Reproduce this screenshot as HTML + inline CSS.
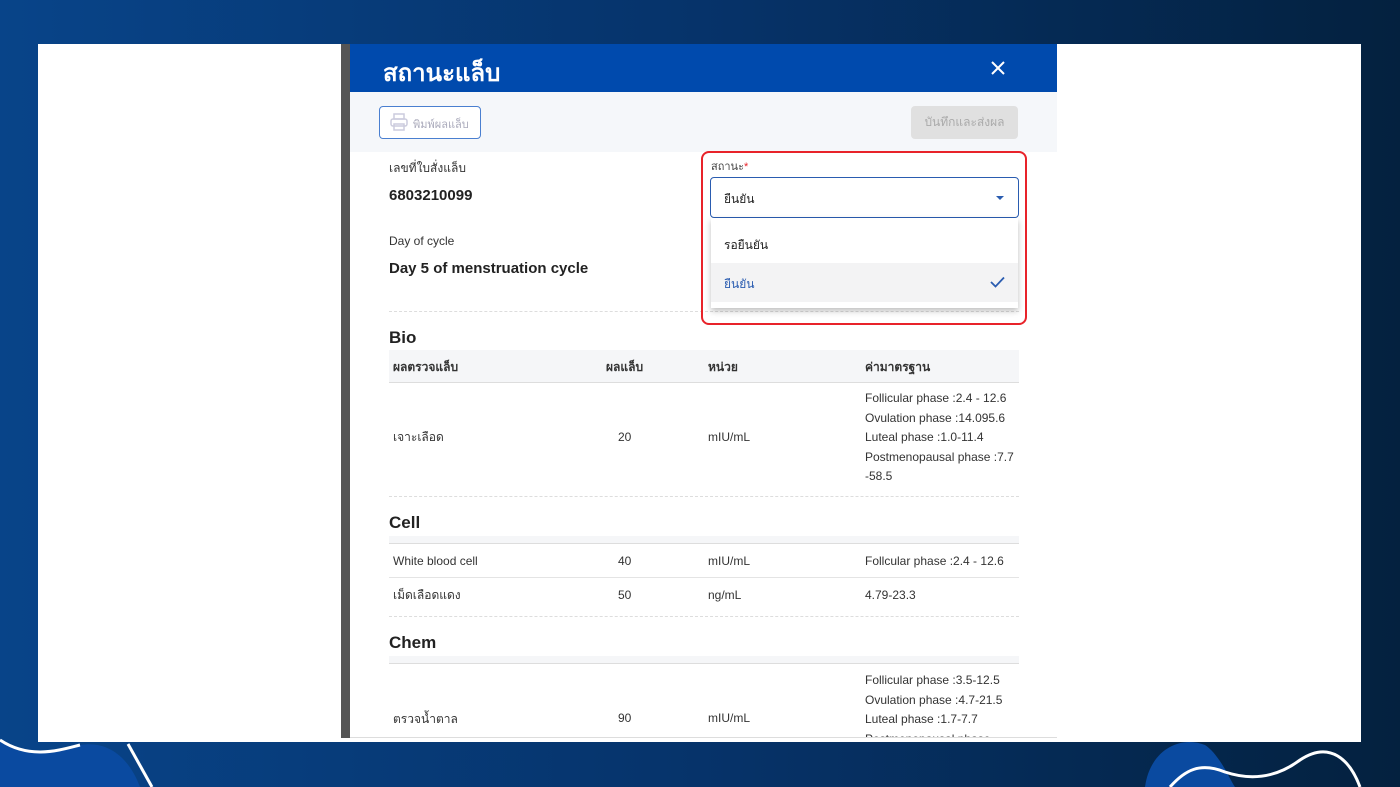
<!DOCTYPE html><html><head><meta charset="utf-8"><style>
*{margin:0;padding:0;box-sizing:border-box}
body{width:1400px;height:787px;overflow:hidden;position:relative;font-family:"Liberation Sans","DejaVu Sans",sans-serif;background:linear-gradient(90deg,#084489 0%,#06336a 50%,#04213f 100%)}
.a{position:absolute}
.t{font-size:12px;color:#333}
.h{font-size:12px;color:#333;font-weight:bold}
</style></head><body>
<svg class="a" style="left:0;top:700px" width="1400" height="87">
<path d="M0 40 C30 60 60 50 80 45 C110 40 130 60 140 87 L0 87Z" fill="#0a4aa0"/>
<path d="M0 40 C30 60 60 50 80 45" stroke="#fff" stroke-width="3" fill="none"/>
<path d="M128 44 L152 87" stroke="#fff" stroke-width="3" fill="none"/>
<path d="M1145 87 C1150 50 1180 35 1205 45 C1220 55 1230 80 1235 87Z" fill="#0a4aa0"/>
<path d="M1170 87 C1185 70 1200 62 1225 72 C1255 82 1280 75 1300 60 C1330 40 1350 60 1360 87" stroke="#fff" stroke-width="3" fill="none"/>
</svg>
<div class="a" style="left:38px;top:44px;width:1323px;height:698px;background:#fff"></div>
<div class="a" style="left:341px;top:44px;width:9px;height:694px;background:#555"></div>
<div class="a" style="left:350px;top:44px;width:707px;height:694px;background:#fff;border-bottom:1px solid #ddd"></div>
<div class="a" style="left:350px;top:44px;width:707px;height:48px;background:#004aad"></div>
<div class="a" style="left:383px;top:53px;color:#fff;font-size:24px;font-weight:bold">สถานะแล็บ</div>
<svg class="a" style="left:991px;top:61px" width="14" height="14"><path d="M1 1L13 13M13 1L1 13" stroke="#fff" stroke-width="2"/></svg>
<div class="a" style="left:350px;top:92px;width:707px;height:60px;background:#f5f7fa"></div>
<div class="a" style="left:379px;top:106px;width:102px;height:33px;border:1px solid #4a7fd0;border-radius:4px;background:#fff"></div>
<svg class="a" style="left:390px;top:113px" width="18" height="18"><rect x="4" y="1" width="10" height="5" fill="none" stroke="#ccd" stroke-width="1.5"/><rect x="1" y="6" width="16" height="7" rx="2" fill="none" stroke="#ccd" stroke-width="1.5"/><rect x="4" y="11" width="10" height="6" fill="none" stroke="#ccd" stroke-width="1.5"/></svg>
<div class="a" style="left:413px;top:115px;font-size:11px;color:#aab">พิมพ์ผลแล็บ</div>
<div class="a" style="left:911px;top:106px;width:107px;height:33px;background:#e0e0e0;border-radius:4px;color:#aaa;font-size:12px;text-align:center;line-height:32px">บันทึกและส่งผล</div>
<div class="a t" style="left:389px;top:159px">เลขที่ใบสั่งแล็บ</div>
<div class="a" style="left:389px;top:187px;font-size:15px;font-weight:bold;color:#222">6803210099</div>
<div class="a t" style="left:389px;top:234px">Day of cycle</div>
<div class="a" style="left:389px;top:260px;font-size:15px;font-weight:bold;color:#222">Day 5 of menstruation cycle</div>
<div class="a" style="left:389px;top:311px;width:630px;border-top:1px dashed #ddd"></div>
<div class="a" style="left:389px;top:328px;font-size:17px;font-weight:bold;color:#222">Bio</div>
<div class="a" style="left:389px;top:350px;width:630px;height:33px;background:#f5f6f8;border-bottom:1px solid #ddd"></div>
<div class="a h" style="left:393px;top:358px">ผลตรวจแล็บ</div>
<div class="a h" style="left:606px;top:358px">ผลแล็บ</div>
<div class="a h" style="left:708px;top:358px">หน่วย</div>
<div class="a h" style="left:865px;top:358px">ค่ามาตรฐาน</div>
<div class="a t" style="left:393px;top:428px">เจาะเลือด</div>
<div class="a t" style="left:618px;top:430px">20</div>
<div class="a t" style="left:708px;top:430px">mIU/mL</div>
<div class="a t" style="left:865px;top:389px;line-height:19.5px">Follicular phase :2.4 - 12.6<br>Ovulation phase :14.095.6<br>Luteal phase :1.0-11.4<br>Postmenopausal phase :7.7<br>-58.5</div>
<div class="a" style="left:389px;top:496px;width:630px;border-top:1px dashed #ddd"></div>
<div class="a" style="left:389px;top:513px;font-size:17px;font-weight:bold;color:#222">Cell</div>
<div class="a" style="left:389px;top:536px;width:630px;height:8px;background:#f5f6f8;border-bottom:1px solid #ddd"></div>
<div class="a t" style="left:393px;top:554px">White blood cell</div>
<div class="a t" style="left:618px;top:554px">40</div>
<div class="a t" style="left:708px;top:554px">mIU/mL</div>
<div class="a t" style="left:865px;top:554px">Follcular phase :2.4 - 12.6</div>
<div class="a" style="left:389px;top:577px;width:630px;border-top:1px solid #e4e4e4"></div>
<div class="a t" style="left:393px;top:586px">เม็ดเลือดแดง</div>
<div class="a t" style="left:618px;top:588px">50</div>
<div class="a t" style="left:708px;top:588px">ng/mL</div>
<div class="a t" style="left:865px;top:588px">4.79-23.3</div>
<div class="a" style="left:389px;top:616px;width:630px;border-top:1px dashed #ddd"></div>
<div class="a" style="left:389px;top:633px;font-size:17px;font-weight:bold;color:#222">Chem</div>
<div class="a" style="left:389px;top:656px;width:630px;height:8px;background:#f5f6f8;border-bottom:1px solid #ddd"></div>
<div class="a" style="left:389px;top:664px;width:630px;height:73px;overflow:hidden">
<div class="a t" style="left:4px;top:46px">ตรวจน้ำตาล</div>
<div class="a t" style="left:229px;top:47px">90</div>
<div class="a t" style="left:319px;top:47px">mIU/mL</div>
<div class="a t" style="left:476px;top:7px;line-height:19.5px">Follicular phase :3.5-12.5<br>Ovulation phase :4.7-21.5<br>Luteal phase :1.7-7.7<br>Postmenopausal phase</div>
</div>
<div class="a" style="left:701px;top:151px;width:326px;height:174px;border:2px solid #e8232a;border-radius:8px"></div>
<div class="a" style="left:711px;top:157px;font-size:11px;color:#444">สถานะ<span style="color:#e8232a">*</span></div>
<div class="a" style="left:710px;top:177px;width:309px;height:41px;border:1.5px solid #2a5cb0;border-radius:4px;background:#fff"></div>
<div class="a t" style="left:724px;top:190px;color:#222">ยืนยัน</div>
<div class="a" style="left:996px;top:196px;width:0;height:0;border-left:4px solid transparent;border-right:4px solid transparent;border-top:4px solid #2a5cb0"></div>
<div class="a" style="left:711px;top:218px;width:307px;height:90px;background:#fff;box-shadow:0 3px 6px rgba(0,0,0,.25)"></div>
<div class="a t" style="left:724px;top:236px;color:#222">รอยืนยัน</div>
<div class="a" style="left:711px;top:263px;width:307px;height:39px;background:#f3f3f4"></div>
<div class="a t" style="left:724px;top:275px;color:#2a5cb0">ยืนยัน</div>
<svg class="a" style="left:990px;top:276px" width="15" height="12"><path d="M1 6L5.5 10.5L14 1.5" stroke="#2a5cb0" stroke-width="1.8" fill="none"/></svg>
</body></html>
